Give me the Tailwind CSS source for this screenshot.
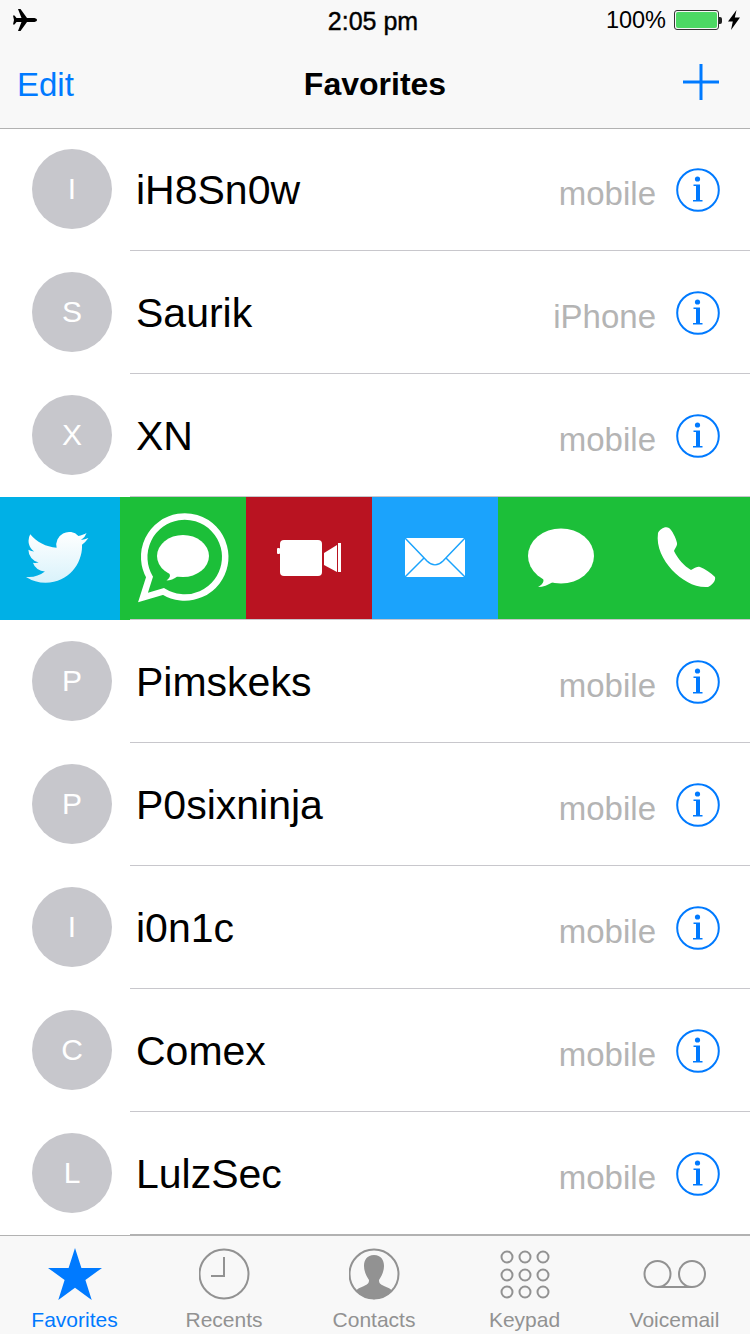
<!doctype html>
<html lang="en">
  <head>
    <meta charset="UTF-8">
    <meta name="viewport" content="width=device-width, initial-scale=1.0">
    <title>Favorites</title>
    <script src="https://cdn.jsdelivr.net/npm/@tailwindcss/browser@4"></script>
  </head>

  <body class="bg-white text-black font-['Liberation_Sans',Arial,sans-serif] antialiased">
    <!-- shared info button -->
    <svg class="hidden">
      <symbol id="info" viewBox="0 0 44 44">
        <circle cx="22" cy="22" r="20.800" fill="none" stroke="#007aff" stroke-width="2"/>
        <circle cx="21.500" cy="11" r="2.600" fill="#007aff"/>
        <path d="M17.500 16.500h6.500v15.500h2.500v1.600h-9.500v-1.600h3v-14h-2.500z" fill="#007aff"/>
      </symbol>
    </svg>

    <div class="w-[750px] h-[1334px] flex flex-col overflow-hidden">
      <!-- Status + nav -->
      <header class="relative z-10 h-[129px] shrink-0 bg-[#f8f8f8] border-b border-[#b2b2b2]">
        <div class="h-[41px] flex items-center justify-between pl-[13px] pr-[10px]">
          <svg class="w-[24px] h-[22px] -mt-px" viewBox="13 9 24 22">
            <path d="M37 20C37 18.500 35 18 33 18L27 18L20.500 9L18 9L21.500 18L16.500 18L14.500 15.500L13 15.500L14 20L13 24.500L14.500 24.500L16.500 22L21.500 22L18 31L20.500 31L27 22L33 22C35 22 37 21.500 37 20Z" fill="#000"/>
          </svg>
          <div class="flex items-center">
            <span class="text-[23.500px] leading-none mr-[8px]">100%</span>
            <div class="w-[45px] h-[20px] -mt-px border border-[#333] rounded-[3px] p-px">
              <div class="w-full h-full bg-[#4cd964] rounded-[2px]"></div>
            </div>
            <div class="w-[3px] h-[7px] -mt-px bg-[#222] rounded-r-[2px] mr-[6px]"></div>
            <svg class="w-[12px] h-[20px] -mt-px" viewBox="0 0 12 20">
              <path d="M8.500 0L0 11.500h4.800L3 20l9-12.500H6.800z" fill="#000"/>
            </svg>
          </div>
        </div>
        <div class="absolute top-[6px] left-0 w-[746px] text-center text-[25px] leading-[30px] [-webkit-text-stroke:0.4px_#000]">2:05 pm</div>
        <div class="relative h-[87px] flex items-center justify-between pl-[17px] pr-[31px]">
          <span class="text-[33px] leading-none text-[#007aff] mb-[1px]">Edit</span>
          <span class="absolute left-0 w-full text-center text-[32px] leading-none font-bold mb-[1px]">Favorites</span>
          <svg class="w-[36px] h-[36px] -mt-[5px]" viewBox="0 0 36 36">
            <path d="M18 0v36M0 18h36" stroke="#007aff" stroke-width="3" fill="none"/>
          </svg>
        </div>
      </header>

      <!-- Favorites list -->
      <main class="flex-1 -mt-px">
        <div class="h-[123px] flex items-center pl-[32px]">
          <div class="w-[80px] h-[80px] mb-[2px] rounded-full bg-[#c7c7cc] text-white text-[30px] flex items-center justify-center shrink-0">I</div>
          <div class="ml-[18px] flex-1 h-full pt-px flex items-center border-b border-[#c8c7cc] pr-[30px]">
            <span class="ml-[6px] mt-[2px] flex-1 text-[41px] leading-none">iH8Sn0w</span>
            <span class="text-[33px] leading-none text-[#b4b4b4] mt-[8px]">mobile</span>
            <svg class="w-[44px] h-[44px] ml-[20px]"><use href="#info"/></svg>
          </div>
        </div>
        <div class="h-[123px] flex items-center pl-[32px]">
          <div class="w-[80px] h-[80px] mb-[2px] rounded-full bg-[#c7c7cc] text-white text-[30px] flex items-center justify-center shrink-0">S</div>
          <div class="ml-[18px] flex-1 h-full pt-px flex items-center border-b border-[#c8c7cc] pr-[30px]">
            <span class="ml-[6px] mt-[2px] flex-1 text-[41px] leading-none">Saurik</span>
            <span class="text-[33px] leading-none text-[#b4b4b4] mt-[8px]">iPhone</span>
            <svg class="w-[44px] h-[44px] ml-[20px]"><use href="#info"/></svg>
          </div>
        </div>
        <div class="h-[123px] flex items-center pl-[32px]">
          <div class="w-[80px] h-[80px] mb-[2px] rounded-full bg-[#c7c7cc] text-white text-[30px] flex items-center justify-center shrink-0">X</div>
          <div class="ml-[18px] flex-1 h-full pt-px flex items-center border-b border-[#c8c7cc] pr-[30px]">
            <span class="ml-[6px] mt-[2px] flex-1 text-[41px] leading-none">XN</span>
            <span class="text-[33px] leading-none text-[#b4b4b4] mt-[8px]">mobile</span>
            <svg class="w-[44px] h-[44px] ml-[20px]"><use href="#info"/></svg>
          </div>
        </div>

        <!-- Swiped action strip -->
        <div class="relative h-[123px] flex">
          <div class="w-[120px] bg-[#00b0e6]">
            <svg class="w-full h-full" viewBox="0 0 120 123">
              <defs>
                <linearGradient id="bird" x1="0" y1="0" x2="0" y2="1">
                  <stop offset="0" stop-color="#ffffff"/>
                  <stop offset="1" stop-color="#d9f2fb"/>
                </linearGradient>
              </defs>
              <g transform="translate(26 33) scale(2.600)">
                <path fill="url(#bird)" d="M23.953 4.570a10 10 0 01-2.825.775 4.958 4.958 0 002.163-2.723c-.951.555-2.005.959-3.127 1.184a4.920 4.920 0 00-8.384 4.482C7.690 8.095 4.067 6.130 1.640 3.162a4.822 4.822 0 00-.666 2.475c0 1.710.870 3.213 2.188 4.096a4.904 4.904 0 01-2.228-.616v.060a4.923 4.923 0 003.946 4.827 4.996 4.996 0 01-2.212.085 4.936 4.936 0 004.604 3.417 9.867 9.867 0 01-6.102 2.105c-.390 0-.779-.023-1.170-.067a13.995 13.995 0 007.557 2.209c9.053 0 13.998-7.496 13.998-13.985 0-.210 0-.420-.015-.630A9.935 9.935 0 0024 4.590z" transform="translate(0 -1.500)"/>
              </g>
            </svg>
          </div>
          <div class="w-[126px] bg-[#1cbf39]">
            <svg class="w-full h-full" viewBox="0 0 126 123">
              <path d="M29.500 80L23 100.500L43.500 94.500A40.500 40.500 0 1 0 29.500 80Z" fill="none" stroke="#fff" stroke-width="6.500" stroke-miterlimit="6"/>
              <ellipse cx="63" cy="59" rx="26" ry="21" fill="#fff"/>
              <path d="M49 74L50 79C49.500 81 48 82 46.500 83.500C50 83.500 54 82 58 79Z" fill="#fff"/>
            </svg>
          </div>
          <div class="w-[126px] bg-[#b91321]">
            <svg class="w-full h-full" viewBox="0 0 126 123">
              <rect x="34" y="43" width="42" height="36" rx="4" fill="#fff"/>
              <rect x="31" y="51" width="3" height="6" rx="1" fill="#fff"/>
              <path d="M78 56L91 48V75L78 68Z" fill="#fff"/>
              <rect x="92" y="46" width="3" height="29" fill="#fff"/>
            </svg>
          </div>
          <div class="w-[126px] bg-[#1ba3fc]">
            <svg class="w-full h-full" viewBox="0 0 126 123">
              <rect x="33" y="41" width="60" height="39" rx="1" fill="#fff"/>
              <path d="M33 41L55 64C60 69 66 69 71 64L93 41M33 80L52 61M93 80L74 61" fill="none" stroke="#1ba3fc" stroke-width="1.500"/>
            </svg>
          </div>
          <div class="flex-1 bg-[#1cbf39]">
            <svg class="w-full h-full" viewBox="0 0 252 123">
              <ellipse cx="63" cy="59" rx="33" ry="27.500" fill="#fff"/>
              <path d="M45 80L45.500 84C45 87 42 89 40 90C45 90 50 88 55 85Z" fill="#fff"/>
              <path d="M160 36C162 32 167 29 171 31C174 33 178 41 179 46C179.500 49 177 51 176 54C180 62 186 69 193 73C196 72 198 69 202 70C207 72 213 76 217 80C218 84 214 88 210 90C196 91 184 83 174 73C165 63 158 50 160 36Z" fill="#fff"/>
            </svg>
          </div>
          <div class="absolute left-[130px] right-0 bottom-0 h-px bg-[#c8c7cc]"></div>
        </div>

        <div class="h-[123px] flex items-center pl-[32px]">
          <div class="w-[80px] h-[80px] mb-[2px] rounded-full bg-[#c7c7cc] text-white text-[30px] flex items-center justify-center shrink-0">P</div>
          <div class="ml-[18px] flex-1 h-full pt-px flex items-center border-b border-[#c8c7cc] pr-[30px]">
            <span class="ml-[6px] mt-[2px] flex-1 text-[41px] leading-none">Pimskeks</span>
            <span class="text-[33px] leading-none text-[#b4b4b4] mt-[8px]">mobile</span>
            <svg class="w-[44px] h-[44px] ml-[20px]"><use href="#info"/></svg>
          </div>
        </div>
        <div class="h-[123px] flex items-center pl-[32px]">
          <div class="w-[80px] h-[80px] mb-[2px] rounded-full bg-[#c7c7cc] text-white text-[30px] flex items-center justify-center shrink-0">P</div>
          <div class="ml-[18px] flex-1 h-full pt-px flex items-center border-b border-[#c8c7cc] pr-[30px]">
            <span class="ml-[6px] mt-[2px] flex-1 text-[41px] leading-none">P0sixninja</span>
            <span class="text-[33px] leading-none text-[#b4b4b4] mt-[8px]">mobile</span>
            <svg class="w-[44px] h-[44px] ml-[20px]"><use href="#info"/></svg>
          </div>
        </div>
        <div class="h-[123px] flex items-center pl-[32px]">
          <div class="w-[80px] h-[80px] mb-[2px] rounded-full bg-[#c7c7cc] text-white text-[30px] flex items-center justify-center shrink-0">I</div>
          <div class="ml-[18px] flex-1 h-full pt-px flex items-center border-b border-[#c8c7cc] pr-[30px]">
            <span class="ml-[6px] mt-[2px] flex-1 text-[41px] leading-none">i0n1c</span>
            <span class="text-[33px] leading-none text-[#b4b4b4] mt-[8px]">mobile</span>
            <svg class="w-[44px] h-[44px] ml-[20px]"><use href="#info"/></svg>
          </div>
        </div>
        <div class="h-[123px] flex items-center pl-[32px]">
          <div class="w-[80px] h-[80px] mb-[2px] rounded-full bg-[#c7c7cc] text-white text-[30px] flex items-center justify-center shrink-0">C</div>
          <div class="ml-[18px] flex-1 h-full pt-px flex items-center border-b border-[#c8c7cc] pr-[30px]">
            <span class="ml-[6px] mt-[2px] flex-1 text-[41px] leading-none">Comex</span>
            <span class="text-[33px] leading-none text-[#b4b4b4] mt-[8px]">mobile</span>
            <svg class="w-[44px] h-[44px] ml-[20px]"><use href="#info"/></svg>
          </div>
        </div>
        <div class="h-[123px] flex items-center pl-[32px]">
          <div class="w-[80px] h-[80px] mb-[2px] rounded-full bg-[#c7c7cc] text-white text-[30px] flex items-center justify-center shrink-0">L</div>
          <div class="ml-[18px] flex-1 h-full pt-px flex items-center border-b border-[#b2b2b2] pr-[30px]">
            <span class="ml-[6px] mt-[2px] flex-1 text-[41px] leading-none">LulzSec</span>
            <span class="text-[33px] leading-none text-[#b4b4b4] mt-[8px]">mobile</span>
            <svg class="w-[44px] h-[44px] ml-[20px]"><use href="#info"/></svg>
          </div>
        </div>
      </main>

      <!-- Tab bar -->
      <nav class="h-[99px] shrink-0 bg-[#f8f8f8] border-t border-[#b2b2b2] flex text-[21px] leading-6 text-[#929292]">
        <div class="w-[150px] pt-3 flex flex-col items-center">
          <svg class="w-[54px] h-[52px]" viewBox="0 0 54 52">
            <path d="M27 0L33.400 19.900H54L37.400 32L43.700 52L27 39.700L10.300 52L16.600 32L0 19.900H20.600Z" fill="#007aff"/>
          </svg>
          <span class="mt-2 mr-[1px] text-[#007aff]">Favorites</span>
        </div>
        <div class="w-[150px] pt-3 flex flex-col items-center">
          <svg class="w-[52px] h-[52px]" viewBox="0 0 52 52">
            <circle cx="25" cy="26" r="24.500" fill="none" stroke="#929292" stroke-width="2"/>
            <path d="M25 9v19H12" fill="none" stroke="#929292" stroke-width="2"/>
          </svg>
          <span class="mt-2 mr-[2px]">Recents</span>
        </div>
        <div class="w-[150px] pt-3 flex flex-col items-center">
          <svg class="w-[52px] h-[52px]" viewBox="0 0 52 52">
            <path d="M25 7C32 7 35 12 35 18C35 24 32 29 30 32C30 35 31 36 35 38C39 39.500 42 41 43 43A24 24 0 0 1 7 43C8 41 11 39.500 15 38C19 36 20 35 20 32C18 29 15 24 15 18C15 12 18 7 25 7Z" fill="#929292"/>
            <circle cx="25" cy="26" r="24.500" fill="none" stroke="#929292" stroke-width="2"/>
          </svg>
          <span class="mt-2 mr-[2px]">Contacts</span>
        </div>
        <div class="w-[150px] pt-3 flex flex-col items-center">
          <svg class="w-[52px] h-[52px]" viewBox="0 0 52 52" fill="none" stroke="#929292" stroke-width="2">
            <circle cx="8" cy="9" r="5.500"/><circle cx="26" cy="9" r="5.500"/><circle cx="44" cy="9" r="5.500"/>
            <circle cx="8" cy="27" r="5.500"/><circle cx="26" cy="27" r="5.500"/><circle cx="44" cy="27" r="5.500"/>
            <circle cx="8" cy="44" r="5.500"/><circle cx="26" cy="44" r="5.500"/><circle cx="44" cy="44" r="5.500"/>
          </svg>
          <span class="mt-2 mr-[1px]">Keypad</span>
        </div>
        <div class="w-[150px] pt-3 flex flex-col items-center">
          <svg class="w-[64px] h-[52px]" viewBox="0 0 64 52" fill="none" stroke="#929292" stroke-width="2">
            <circle cx="14.500" cy="26" r="13"/><circle cx="49" cy="26" r="13"/>
            <path d="M14.500 39H49"/>
          </svg>
          <span class="mt-2 mr-[1px]">Voicemail</span>
        </div>
      </nav>
    </div>
  </body>
</html>
